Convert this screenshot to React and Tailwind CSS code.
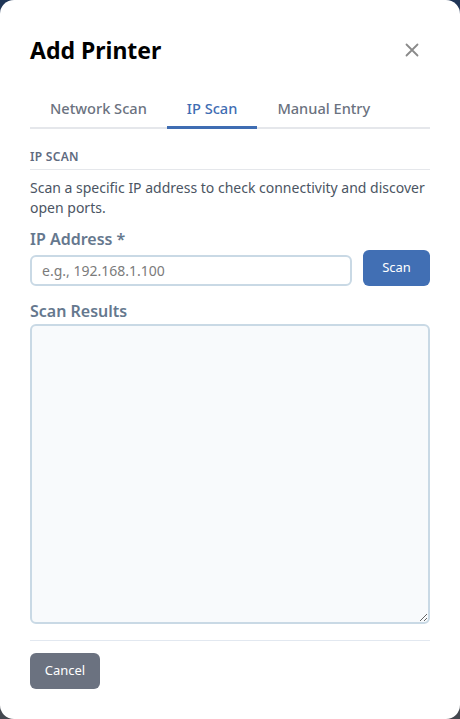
import React from "react";

export default function App() {
  return (
    <div
      className="w-[460px] h-[719px] bg-gradient-to-b from-[#1f3556] to-[#44484f]"
      style={{ fontFamily: '"Noto Sans", "Open Sans", sans-serif' }}
    >
      <div className="w-full h-full bg-white rounded-[14px] px-[30px] pt-[34px] flex flex-col">
        <div className="flex items-center justify-between h-[32px]">
          <h2 className="text-[23px] font-bold text-black leading-none">Add Printer</h2>
          <button className="w-[24px] h-[24px] flex items-center justify-center text-[#8a8a8a] mr-[6px]">
            <svg width="14" height="14" viewBox="0 0 14 14" fill="none" stroke="currentColor" strokeWidth="1.8" strokeLinecap="round">
              <path d="M1.5 1.5 L12.5 12.5 M12.5 1.5 L1.5 12.5" />
            </svg>
          </button>
        </div>

        <div className="mt-[32px] flex border-b-2 border-[#e5e7eb]">
          <div className="px-[20px] pb-[6px] text-[14.6px] font-medium text-[#6b7280] -mb-[2px]">Network Scan</div>
          <div className="px-[20px] pb-[6px] text-[14.6px] font-medium text-[#3f6db3] border-b-[3px] border-[#3f6db3] -mb-[2px]">IP Scan</div>
          <div className="px-[20px] pb-[6px] text-[14.6px] font-medium text-[#6b7280] -mb-[2px]">Manual Entry</div>
        </div>

        <div className="mt-[20px] pb-[4px] border-b border-[#e5e7eb] text-[12px] font-semibold tracking-[0.3px] text-[#5f6b7f] uppercase leading-[16px]">
          IP Scan
        </div>
        <p className="mt-[8px] text-[14px] leading-[20px] text-[#4b5563]">
          Scan a specific IP address to check connectivity and discover open ports.
        </p>

        <label className="mt-[10px] text-[16px] font-semibold text-[#65788e] leading-[22px]">IP Address *</label>
        <div className="mt-[0px] flex items-start gap-[11px]">
          <input
            className="flex-1 mt-[5px] h-[31px] rounded-[6px] border-2 border-[#c9d9e5] px-[10px] text-[14px] text-[#374151] placeholder:text-[#7b7b7b] outline-none"
            placeholder="e.g., 192.168.1.100"
          />
          <button className="w-[67px] h-[36px] rounded-[6px] bg-[#416fb4] text-white text-[13px]">Scan</button>
        </div>

        <label className="mt-[14px] text-[16px] font-semibold text-[#65788e] leading-[22px]">Scan Results</label>
        <textarea
          className="mt-[2px] h-[300px] w-full rounded-[6px] border-2 border-[#c9d9e5] bg-[#f8fafc] outline-none resize-y"
        />

        <div className="mt-[16px] border-t border-[#e2e8f0]" />
        <div className="mt-[12px]">
          <button className="w-[70px] h-[36px] rounded-[6px] bg-[#6b7280] text-white text-[13px]">Cancel</button>
        </div>
      </div>
    </div>
  );
}
